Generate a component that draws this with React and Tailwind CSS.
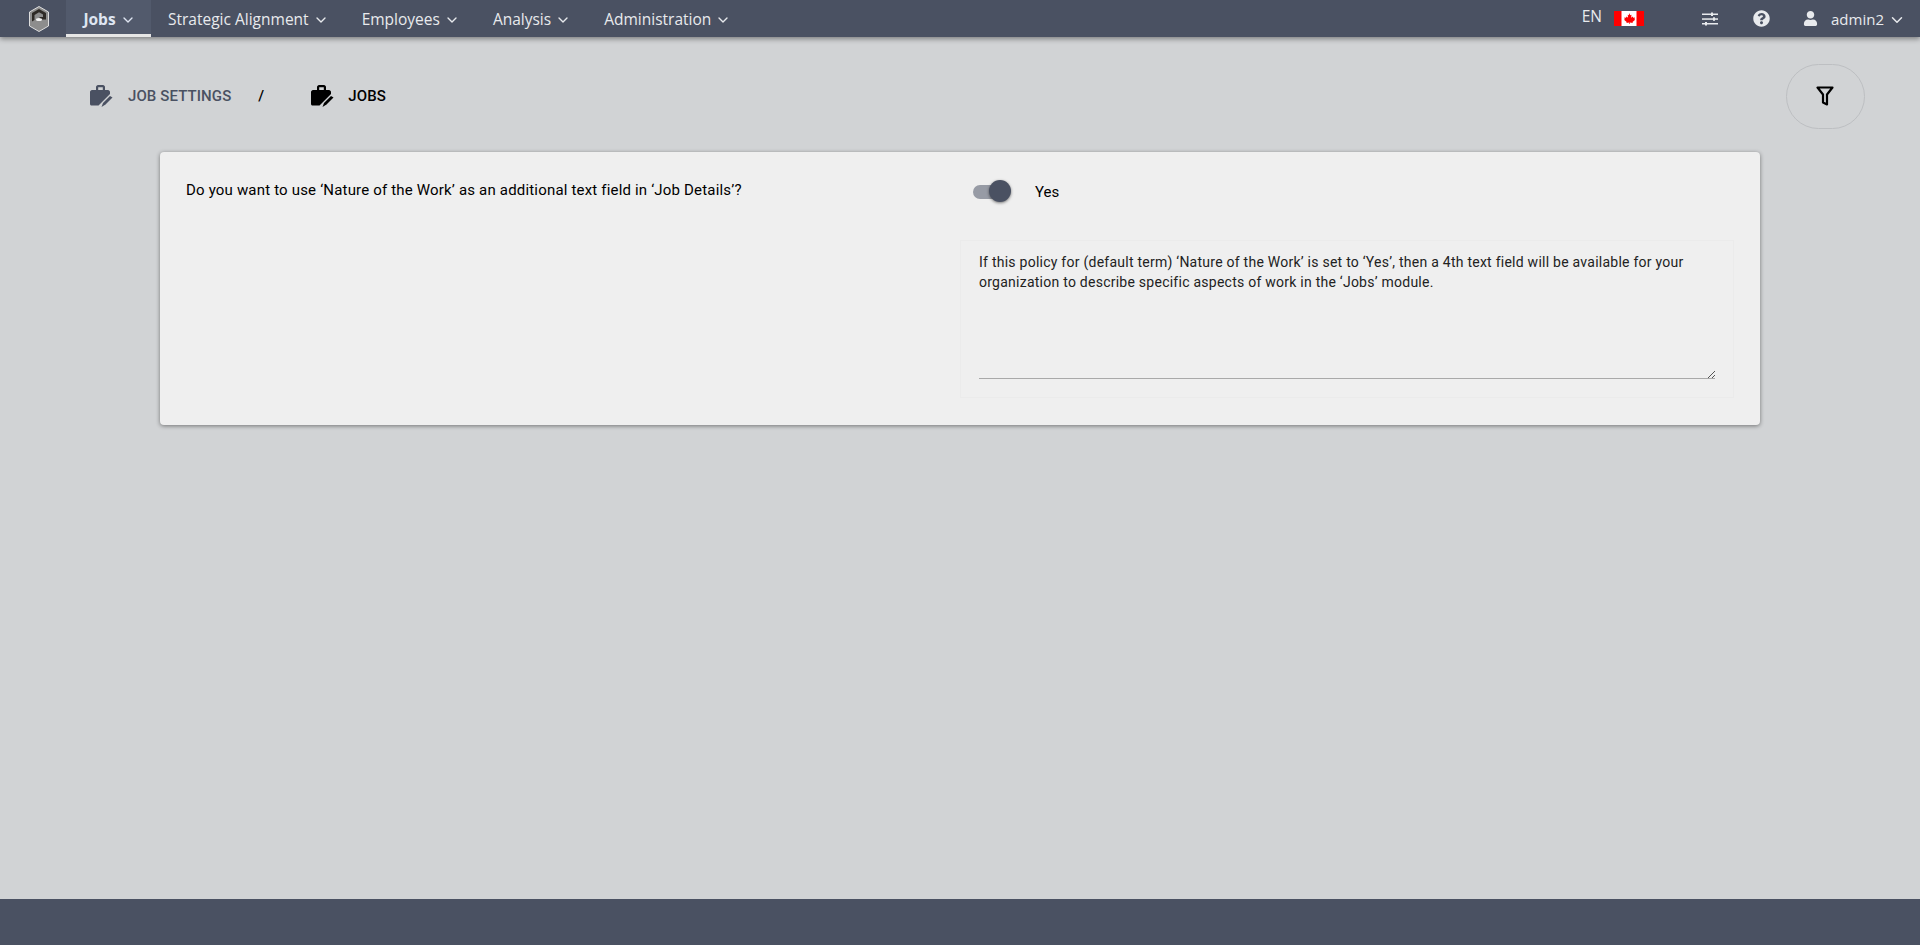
import React from 'react';
import { ChevronDown } from 'lucide-react';
import { FaUser, FaQuestionCircle } from 'react-icons/fa';

const navItems = ['Strategic Alignment', 'Employees', 'Analysis', 'Administration'];

const Logo = () => (
  <svg width="20" height="26" viewBox="0 0 20 26">
    <path d="M10 .5 L19.500 6 V20 L10 25.500 L.5 20 V6 Z" fill="#8d8d8d" stroke="#dedede" strokeWidth="1" />
    <path d="M10 3 L17 7 V13.500 H9 L11 11 H14 V8.500 L10 6.200 L5.500 9 V14 L3 15.500 V7 Z" fill="#2e2a26" />
    <ellipse cx="10" cy="13.500" rx="3" ry="1.500" fill="#f4f4f4" />
  </svg>
);

const JobIcon = ({ color }) => (
  <svg width="23" height="22" viewBox="0 0 23 22">
    <path d="M6 5V2C6 1 7 0 8 0h5c1 0 2 1 2 2v3h3c1 0 2 1 2 2v2L8.500 20.500H1.500C.7 20.500 0 19.800 0 19V7c0-1 1-2 2-2h4zm2.200 0h4.600V2.200H8.200V5z" fill={color} fillRule="evenodd" />
    <path d="M11.500 22l1.500-4 7-7 2.500 1.500-7 7z" fill={color} />
  </svg>
);

const Flag = () => (
  <svg width="30" height="15" viewBox="0 0 30 15">
    <rect width="30" height="15" fill="#fff" />
    <rect width="7.500" height="15" fill="#f00" />
    <rect x="22.500" width="7.500" height="15" fill="#f00" />
    <path d="M15 2l1.300 2.300 1.200-.6-.4 3 1.600-1.200.5 1.200 1.800-.3-.6 1.800.8.500-2.700 2.200.3 1-2.900-.4V13h-.6v-1.500l-2.900.4.300-1-2.700-2.200.8-.5-.6-1.800 1.800.3.500-1.200 1.600 1.200-.4-3 1.200.6z" fill="#f00" />
  </svg>
);

const Sliders = () => (
  <svg width="16" height="14" viewBox="0 0 16 14" fill="#e8eaed">
    <rect y="1.500" width="16" height="1.500" />
    <rect y="6.300" width="16" height="1.500" />
    <rect y="11" width="16" height="1.500" />
    <rect x="9" y="0.500" width="2" height="3.500" />
    <rect x="11" y="5.300" width="2" height="3.500" />
    <rect x="3" y="10" width="2" height="3.500" />
  </svg>
);

const FilterIcon = () => (
  <svg width="18" height="20" viewBox="0 0 18 20" fill="none" stroke="#000" strokeWidth="2.200" strokeLinejoin="round">
    <path d="M1.500 1.500h15l-5.500 7v10L7 16.500v-8z" />
  </svg>
);

export default function App() {
  return (
    <div className="h-[945px] flex flex-col bg-[#d1d3d5] font-['Roboto',sans-serif] overflow-hidden">
      <header className="h-[37px] shrink-0 flex items-stretch bg-[#4a5162] text-[#e8eaed] shadow-[0_2px_5px_rgba(0,0,0,0.4)] font-['Open_Sans',sans-serif] text-[15.500px] relative z-10">
        <div className="w-[66px] flex items-center justify-center pl-[12px]">
          <Logo />
        </div>
        <div className="w-[85px] flex items-center justify-center gap-[4px] pt-[5px] pl-[2px] bg-[#525a6c] border-b-[3px] border-[#e6e6e6] font-bold text-[#dfe6f2]">
          Jobs <ChevronDown size={16} strokeWidth={2} />
        </div>
        <nav className="flex items-center pl-[17px] pt-[3px] gap-[33px]">
          {navItems.map((item) => (
            <div key={item} className="flex items-center gap-[4px]">
              {item} <ChevronDown size={16} strokeWidth={2} />
            </div>
          ))}
        </nav>
        <div className="ml-auto flex items-center pr-[14px]">
          <span className="mr-[12px] -mt-[3px]">EN</span>
          <span className="mr-[58px] -mt-[1px] flex"><Flag /></span>
          <span className="mr-[35px] flex"><Sliders /></span>
          <FaQuestionCircle size={17} className="mr-[33px]" />
          <FaUser size={15} className="mr-[13px]" />
          <span className="mr-[4px] text-[15px] pt-[2px]">admin2</span>
          <ChevronDown size={18} strokeWidth={2} className="mt-[3px]" />
        </div>
      </header>

      <main className="flex-1">
        <div className="flex items-center h-[115px] pt-[3px] pl-[90px] pr-[55px] text-[15px] tracking-[0.1px] font-medium">
          <JobIcon color="#4a5162" />
          <span className="ml-[15px] text-[#4a5162]">JOB SETTINGS</span>
          <span className="ml-[27px] text-black">/</span>
          <span className="ml-[47px] flex"><JobIcon color="#000" /></span>
          <span className="ml-[14px] text-black">JOBS</span>
          <button className="ml-auto w-[79px] h-[65px] rounded-full border border-[#bdbfc2] flex items-center justify-center pr-[2px]">
            <FilterIcon />
          </button>
        </div>

        <section className="mx-[160px] h-[273px] bg-[#efefef] rounded-[4px] shadow-[0_1px_4px_rgba(0,0,0,0.45)] flex">
          <div className="w-[800px] pl-[26px] pt-[28px] text-[15px] leading-[20px] tracking-[0.18px] text-black">
            Do you want to use ‘Nature of the Work’ as an additional text field in ‘Job Details’?
          </div>
          <div className="flex-1 pr-[26px]">
            <div className="flex items-start h-[88px] pl-[13px] pt-[33px]">
              <div className="relative w-[34px] h-[14px] rounded-full bg-[#979ba5]">
                <span className="absolute right-[-4px] top-[-5px] w-[22px] h-[22px] rounded-full bg-[#4a5162] shadow-[0_1px_3px_rgba(0,0,0,0.5)]" />
              </div>
              <span className="ml-[28px] text-[15px] leading-[14px] text-black">Yes</span>
            </div>
            <div className="h-[158px] border border-[#ebebeb] px-[18px] pt-[11px] pb-[18px] flex flex-col">
              <div className="relative flex-1 border-b border-[#a9a9a9] text-[14px] leading-[20px] tracking-[0.25px] text-[#222]">
                If this policy for (default term) ‘Nature of the Work’ is set to ‘Yes’, then a 4th text field will be available for your organization to describe specific aspects of work in the ‘Jobs’ module.
                <svg className="absolute right-0 bottom-0" width="8" height="8" viewBox="0 0 8 8" stroke="#555" strokeWidth="1">
                  <path d="M1 8 L8 1 M5 8 L8 5" />
                </svg>
              </div>
            </div>
          </div>
        </section>
      </main>

      <footer className="h-[46px] shrink-0 bg-[#4a5162]" />
    </div>
  );
}
